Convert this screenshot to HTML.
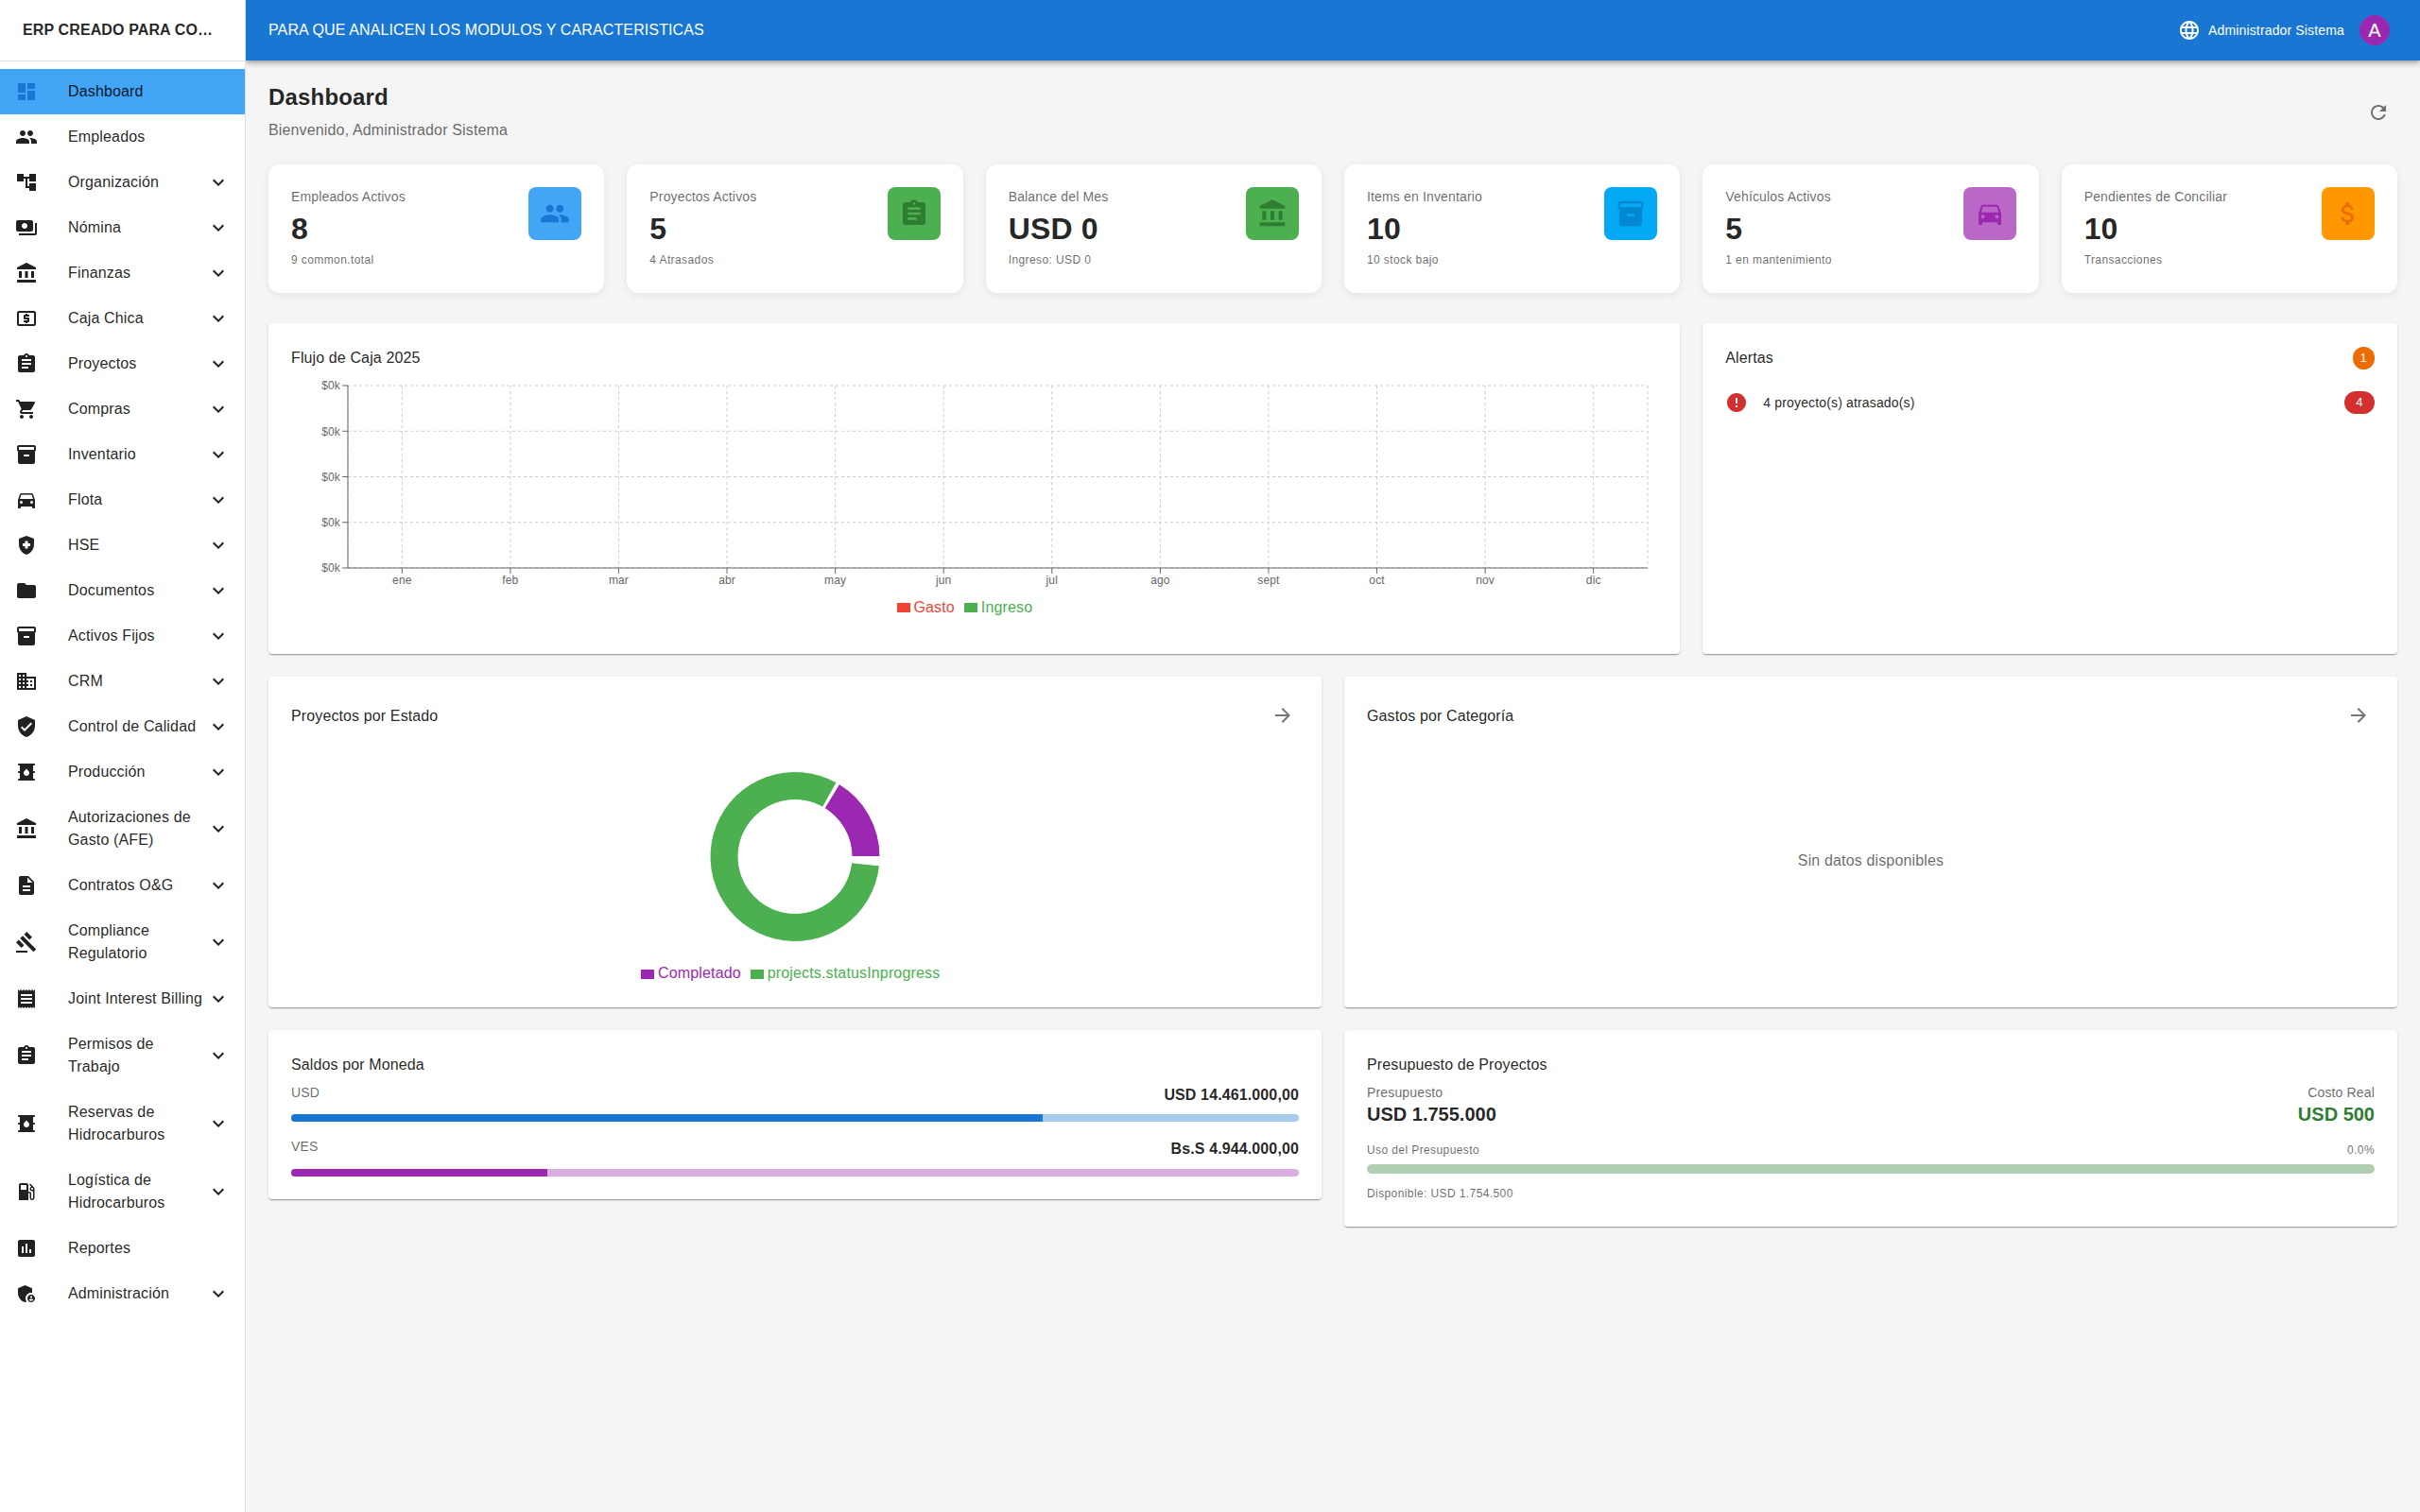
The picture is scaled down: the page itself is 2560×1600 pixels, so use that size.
<!DOCTYPE html>
<html lang="es"><head><meta charset="utf-8"><title>Dashboard</title>
<style>
*{box-sizing:border-box}
html,body{margin:0;padding:0}
body{width:2560px;height:1600px;overflow:hidden;background:#f5f5f5;font-family:"Liberation Sans",Arial,sans-serif;color:rgba(0,0,0,.87);font-size:16px;line-height:1.5;letter-spacing:.15px;position:relative}
.ic{display:inline-block;width:24px;height:24px;fill:currentColor;flex-shrink:0}
#side{position:absolute;z-index:5;left:0;top:0;width:260px;height:1600px;background:#fff;border-right:1px solid rgba(0,0,0,.12)}
#brand{height:64px;padding:0 24px;display:flex;align-items:center;font-weight:700;font-size:16px;letter-spacing:.12px;white-space:nowrap;overflow:hidden}
#brand span{overflow:hidden;text-overflow:ellipsis;white-space:nowrap;display:block;width:100%}
#sdiv{height:1px;background:rgba(0,0,0,.12)}
#nav{padding:8px 0}
.ni{display:flex;align-items:center;padding:8px 16px;min-height:48px;color:rgba(0,0,0,.87)}
.ni.sel{background:#42a5f5}
.ni.sel .nic{color:#1976d2}
.nic{min-width:56px;display:inline-flex;color:rgba(0,0,0,.87)}
.nt{flex:1 1 auto;min-width:0;margin:4px 0;font-size:16px;line-height:24px;letter-spacing:.15px}
.ex{color:rgba(0,0,0,.87)}
#bar{position:absolute;left:260px;top:0;width:2300px;height:64px;background:#1976d2;color:#fff;display:flex;align-items:center;padding:0 24px;box-shadow:0 2px 4px -1px rgba(0,0,0,.2),0 4px 5px 0 rgba(0,0,0,.14),0 1px 10px 0 rgba(0,0,0,.12)}
#bar .ttl{flex:1;font-size:16px;letter-spacing:.12px}
#bar .usr{font-size:14px;margin-left:8px;margin-right:16px;width:144px;white-space:nowrap}
#bar .av{margin-right:8px;width:32px;height:32px;border-radius:50%;background:#9c27b0;color:#fff;display:flex;align-items:center;justify-content:center;font-size:20px}
#main{position:absolute;left:284px;top:88px;width:2252px}
h1{margin:0;font-size:24px;font-weight:700;line-height:1.235;letter-spacing:.176px}
.sub{color:rgba(0,0,0,.6);font-size:16px;margin-top:8px}
.rf{position:absolute;right:8px;top:19px;color:rgba(0,0,0,.54)}
.stats{position:absolute;top:86px;left:0;width:2252px;display:flex;gap:24px}
.sc{position:relative;flex:1 1 0;height:136px;background:#fff;border-radius:12px;box-shadow:0 2px 8px rgba(0,0,0,.08);padding:24px}
.sl{font-size:14px;line-height:20px;color:rgba(0,0,0,.6)}
.sv{font-size:32px;font-weight:700;line-height:40px;margin-top:4px}
.ss{font-size:12px;line-height:20px;color:rgba(0,0,0,.6);margin-top:3px;letter-spacing:.4px}
.sb{position:absolute;right:24px;top:24px;width:56px;height:56px;border-radius:8px;display:flex;align-items:center;justify-content:center}
.card{position:absolute;background:#fff;border-radius:4px;box-shadow:0 2px 1px -1px rgba(0,0,0,.2),0 1px 1px 0 rgba(0,0,0,.14),0 1px 3px 0 rgba(0,0,0,.12)}
.ct{position:absolute;left:24px;font-size:16px;line-height:26px;letter-spacing:.12px;white-space:nowrap}
.abs{position:absolute;white-space:nowrap}
.sec{color:rgba(0,0,0,.6)}
.b14{font-size:14px;line-height:20px;letter-spacing:.15px}
.cap{font-size:12px;line-height:20px;letter-spacing:.4px}
.chip{position:absolute;height:24px;border-radius:12px;color:#fff;font-size:13px;line-height:24px;text-align:center}
.lg{position:absolute;font-size:16px;line-height:24px;white-space:nowrap;display:flex;align-items:center}
.lg i{display:inline-block;width:14px;height:10.5px;margin-right:3.4px}
.lg span{margin-right:10.6px}
.pb{position:absolute;left:24px;right:24px;overflow:hidden}
.pb b{display:block;height:100%}
</style></head><body>
<div id="side">
<div id="brand"><span>ERP CREADO PARA CO…</span></div>
<div id="sdiv"></div>
<div id="nav">
<div class="ni sel"><span class="nic"><svg class="ic" viewBox="0 0 24 24" style="width:24px;height:24px"><path d="M3 13h8V3H3zm0 8h8v-6H3zm10 0h8V11h-8zm0-18v6h8V3z"/></svg></span><span class="nt">Dashboard</span></div>
<div class="ni"><span class="nic"><svg class="ic" viewBox="0 0 24 24" style="width:24px;height:24px"><path d="M16 11c1.66 0 2.99-1.34 2.99-3S17.66 5 16 5c-1.66 0-3 1.34-3 3s1.34 3 3 3zm-8 0c1.66 0 2.99-1.34 2.99-3S9.66 5 8 5C6.34 5 5 6.34 5 8s1.34 3 3 3zm0 2c-2.33 0-7 1.17-7 3.5V19h14v-2.5c0-2.33-4.67-3.5-7-3.500zm8 0c-.29 0-.62.02-.97.05 1.16.84 1.97 1.97 1.97 3.45V19h6v-2.500c0-2.33-4.67-3.5-7-3.5z"/></svg></span><span class="nt">Empleados</span></div>
<div class="ni"><span class="nic"><svg class="ic" viewBox="0 0 24 24" style="width:24px;height:24px"><path d="M22 11V3h-7v3H9V3H2v8h7V8h2v10h4v3h7v-8h-7v3h-2V8h2v3z"/></svg></span><span class="nt">Organización</span><svg class="ic ex" viewBox="0 0 24 24" style="width:24px;height:24px"><path d="M16.590 8.590 12 13.170 7.410 8.590 6 10l6 6 6-6z"/></svg></div>
<div class="ni"><span class="nic"><svg class="ic" viewBox="0 0 24 24" style="width:24px;height:24px"><path d="M19 14V6c0-1.1-.9-2-2-2H3c-1.1 0-2 .9-2 2v8c0 1.1.9 2 2 2h14c1.1 0 2-.9 2-2zm-9-1c-1.66 0-3-1.34-3-3s1.34-3 3-3 3 1.34 3 3-1.34 3-3 3zm13-6v11c0 1.1-.9 2-2 2H4v-2h17V7h2z"/></svg></span><span class="nt">Nómina</span><svg class="ic ex" viewBox="0 0 24 24" style="width:24px;height:24px"><path d="M16.590 8.590 12 13.170 7.410 8.590 6 10l6 6 6-6z"/></svg></div>
<div class="ni"><span class="nic"><svg class="ic" viewBox="0 0 24 24" style="width:24px;height:24px"><path d="M4 10h3v7H4zM10.5 10h3v7h-3zM2 19h20v3H2zM17 10h3v7h-3zM12 1 2 6v2h20V6z"/></svg></span><span class="nt">Finanzas</span><svg class="ic ex" viewBox="0 0 24 24" style="width:24px;height:24px"><path d="M16.590 8.590 12 13.170 7.410 8.590 6 10l6 6 6-6z"/></svg></div>
<div class="ni"><span class="nic"><svg class="ic" viewBox="0 0 24 24" style="width:24px;height:24px"><path d="M11 17h2v-1h1c.55 0 1-.45 1-1v-3c0-.55-.45-1-1-1h-3v-1h4V8h-2V7h-2v1h-1c-.55 0-1 .45-1 1v3c0 .55.45 1 1 1h3v1H9v2h2v1zm9-13H4c-1.11 0-1.99.89-1.99 2L2 18c0 1.11.89 2 2 2h16c1.11 0 2-.89 2-2V6c0-1.11-.89-2-2-2zm0 14H4V6h16v12z"/></svg></span><span class="nt">Caja Chica</span><svg class="ic ex" viewBox="0 0 24 24" style="width:24px;height:24px"><path d="M16.590 8.590 12 13.170 7.410 8.590 6 10l6 6 6-6z"/></svg></div>
<div class="ni"><span class="nic"><svg class="ic" viewBox="0 0 24 24" style="width:24px;height:24px"><path d="M19 3h-4.180C14.4 1.84 13.3 1 12 1c-1.3 0-2.4.84-2.82 2H5c-1.1 0-2 .9-2 2v14c0 1.1.9 2 2 2h14c1.1 0 2-.9 2-2V5c0-1.1-.9-2-2-2zm-7 0c.55 0 1 .45 1 1s-.45 1-1 1-1-.45-1-1 .45-1 1-1zm2 14H7v-2h7v2zm3-4H7v-2h10v2zm0-4H7V7h10v2z"/></svg></span><span class="nt">Proyectos</span><svg class="ic ex" viewBox="0 0 24 24" style="width:24px;height:24px"><path d="M16.590 8.590 12 13.170 7.410 8.590 6 10l6 6 6-6z"/></svg></div>
<div class="ni"><span class="nic"><svg class="ic" viewBox="0 0 24 24" style="width:24px;height:24px"><path d="M7 18c-1.1 0-1.99.9-1.99 2S5.9 22 7 22s2-.9 2-2-.9-2-2-2zM1 2v2h2l3.6 7.59-1.35 2.45c-.16.28-.25.61-.25.96 0 1.1.9 2 2 2h12v-2H7.42c-.14 0-.25-.11-.25-.25l.03-.12.9-1.63h7.45c.75 0 1.41-.41 1.75-1.03l3.58-6.49c.08-.14.12-.31.12-.48 0-.55-.45-1-1-1H5.21l-.94-2H1zm16 16c-1.1 0-1.99.9-1.99 2s.89 2 1.99 2 2-.9 2-2-.9-2-2-2z"/></svg></span><span class="nt">Compras</span><svg class="ic ex" viewBox="0 0 24 24" style="width:24px;height:24px"><path d="M16.590 8.590 12 13.170 7.410 8.590 6 10l6 6 6-6z"/></svg></div>
<div class="ni"><span class="nic"><svg class="ic" viewBox="0 0 24 24" style="width:24px;height:24px"><path d="M20 2H4c-1 0-2 .9-2 2v3.010c0 .72.43 1.34 1 1.69V20c0 1.1 1.1 2 2 2h14c.9 0 2-.9 2-2V8.7c.57-.35 1-.97 1-1.69V4c0-1.1-1-2-2-2zm-5 12H9v-2h6v2zm5-7H4V4h16v3z"/></svg></span><span class="nt">Inventario</span><svg class="ic ex" viewBox="0 0 24 24" style="width:24px;height:24px"><path d="M16.590 8.590 12 13.170 7.410 8.590 6 10l6 6 6-6z"/></svg></div>
<div class="ni"><span class="nic"><svg class="ic" viewBox="0 0 24 24" style="width:24px;height:24px"><path d="M18.92 6.010C18.72 5.42 18.16 5 17.5 5h-11c-.66 0-1.21.42-1.42 1.010L3 12v8c0 .55.45 1 1 1h1c.55 0 1-.45 1-1v-1h12v1c0 .55.45 1 1 1h1c.55 0 1-.45 1-1v-8l-2.080-5.990zM6.5 16c-.83 0-1.500-.67-1.500-1.500S5.67 13 6.5 13s1.5.67 1.5 1.500S7.33 16 6.5 16zm11 0c-.83 0-1.500-.67-1.500-1.500s.67-1.500 1.500-1.500 1.500.67 1.500 1.500-.67 1.500-1.500 1.500zM5 11l1.500-4.500h11L19 11H5z"/></svg></span><span class="nt">Flota</span><svg class="ic ex" viewBox="0 0 24 24" style="width:24px;height:24px"><path d="M16.590 8.590 12 13.170 7.410 8.590 6 10l6 6 6-6z"/></svg></div>
<div class="ni"><span class="nic"><svg class="ic" viewBox="0 0 24 24" style="width:24px;height:24px"><path d="M10.5 13H8v-3h2.500V7.500h3V10H16v3h-2.500v2.500h-3V13zM12 2 4 5v6.090c0 5.050 3.410 9.760 8 10.910 4.590-1.150 8-5.860 8-10.910V5l-8-3z"/></svg></span><span class="nt">HSE</span><svg class="ic ex" viewBox="0 0 24 24" style="width:24px;height:24px"><path d="M16.590 8.590 12 13.170 7.410 8.590 6 10l6 6 6-6z"/></svg></div>
<div class="ni"><span class="nic"><svg class="ic" viewBox="0 0 24 24" style="width:24px;height:24px"><path d="M10 4H4c-1.1 0-1.99.9-1.99 2L2 18c0 1.1.9 2 2 2h16c1.1 0 2-.9 2-2V8c0-1.1-.9-2-2-2h-8l-2-2z"/></svg></span><span class="nt">Documentos</span><svg class="ic ex" viewBox="0 0 24 24" style="width:24px;height:24px"><path d="M16.590 8.590 12 13.170 7.410 8.590 6 10l6 6 6-6z"/></svg></div>
<div class="ni"><span class="nic"><svg class="ic" viewBox="0 0 24 24" style="width:24px;height:24px"><path d="M20 2H4c-1 0-2 .9-2 2v3.010c0 .72.43 1.34 1 1.69V20c0 1.1 1.1 2 2 2h14c.9 0 2-.9 2-2V8.7c.57-.35 1-.97 1-1.69V4c0-1.1-1-2-2-2zm-5 12H9v-2h6v2zm5-7H4V4h16v3z"/></svg></span><span class="nt">Activos Fijos</span><svg class="ic ex" viewBox="0 0 24 24" style="width:24px;height:24px"><path d="M16.590 8.590 12 13.170 7.410 8.590 6 10l6 6 6-6z"/></svg></div>
<div class="ni"><span class="nic"><svg class="ic" viewBox="0 0 24 24" style="width:24px;height:24px"><path d="M12 7V3H2v18h20V7H12zM6 19H4v-2h2v2zm0-4H4v-2h2v2zm0-4H4V9h2v2zm0-4H4V5h2v2zm4 12H8v-2h2v2zm0-4H8v-2h2v2zm0-4H8V9h2v2zm0-4H8V5h2v2zm10 12h-8v-2h2v-2h-2v-2h2v-2h-2V9h8v10zm-2-8h-2v2h2v-2zm0 4h-2v2h2v-2z"/></svg></span><span class="nt">CRM</span><svg class="ic ex" viewBox="0 0 24 24" style="width:24px;height:24px"><path d="M16.590 8.590 12 13.170 7.410 8.590 6 10l6 6 6-6z"/></svg></div>
<div class="ni"><span class="nic"><svg class="ic" viewBox="0 0 24 24" style="width:24px;height:24px"><path d="M12 1 3 5v6c0 5.550 3.840 10.740 9 12 5.160-1.260 9-6.450 9-12V5l-9-4zm-2 16-4-4 1.410-1.410L10 14.170l6.590-6.590L18 9l-8 8z"/></svg></span><span class="nt">Control de Calidad</span><svg class="ic ex" viewBox="0 0 24 24" style="width:24px;height:24px"><path d="M16.590 8.590 12 13.170 7.410 8.590 6 10l6 6 6-6z"/></svg></div>
<div class="ni"><span class="nic"><svg class="ic" viewBox="0 0 24 24" style="width:24px;height:24px"><path d="M20 13c.55 0 1-.45 1-1s-.45-1-1-1h-1V5h1c.55 0 1-.45 1-1s-.45-1-1-1H4c-.55 0-1 .45-1 1s.45 1 1 1h1v6H4c-.55 0-1 .45-1 1s.45 1 1 1h1v6H4c-.55 0-1 .45-1 1s.45 1 1 1h16c.55 0 1-.45 1-1s-.45-1-1-1h-1v-6h1zm-8 3c-1.660 0-3-1.320-3-2.950 0-1.300.52-1.670 3-4.550 2.470 2.860 3 3.240 3 4.550 0 1.630-1.340 2.950-3 2.950z"/></svg></span><span class="nt">Producción</span><svg class="ic ex" viewBox="0 0 24 24" style="width:24px;height:24px"><path d="M16.590 8.590 12 13.170 7.410 8.590 6 10l6 6 6-6z"/></svg></div>
<div class="ni"><span class="nic"><svg class="ic" viewBox="0 0 24 24" style="width:24px;height:24px"><path d="M4 10h3v7H4zM10.5 10h3v7h-3zM2 19h20v3H2zM17 10h3v7h-3zM12 1 2 6v2h20V6z"/></svg></span><span class="nt">Autorizaciones de<br>Gasto (AFE)</span><svg class="ic ex" viewBox="0 0 24 24" style="width:24px;height:24px"><path d="M16.590 8.590 12 13.170 7.410 8.590 6 10l6 6 6-6z"/></svg></div>
<div class="ni"><span class="nic"><svg class="ic" viewBox="0 0 24 24" style="width:24px;height:24px"><path d="M14 2H6c-1.1 0-1.99.9-1.99 2L4 20c0 1.1.89 2 1.99 2H18c1.1 0 2-.9 2-2V8l-6-6zm2 16H8v-2h8v2zm0-4H8v-2h8v2zm-3-5V3.500L18.500 9H13z"/></svg></span><span class="nt">Contratos O&amp;G</span><svg class="ic ex" viewBox="0 0 24 24" style="width:24px;height:24px"><path d="M16.590 8.590 12 13.170 7.410 8.590 6 10l6 6 6-6z"/></svg></div>
<div class="ni"><span class="nic"><svg class="ic" viewBox="0 0 24 24" style="width:24px;height:24px"><path d="M1 21h12v2H1zM5.245 8.070l2.830-2.827 14.140 14.142-2.828 2.828zM12.317 1l5.657 5.656-2.830 2.830-5.654-5.660zM3.825 9.485l5.657 5.657-2.828 2.828-5.657-5.657z"/></svg></span><span class="nt">Compliance<br>Regulatorio</span><svg class="ic ex" viewBox="0 0 24 24" style="width:24px;height:24px"><path d="M16.590 8.590 12 13.170 7.410 8.590 6 10l6 6 6-6z"/></svg></div>
<div class="ni"><span class="nic"><svg class="ic" viewBox="0 0 24 24" style="width:24px;height:24px"><path d="M18 17H6v-2h12v2zm0-4H6v-2h12v2zm0-4H6V7h12v2zM3 22l1.500-1.500L6 22l1.500-1.500L9 22l1.500-1.500L12 22l1.500-1.500L15 22l1.500-1.500L18 22l1.500-1.500L21 22V2l-1.500 1.500L18 2l-1.500 1.500L15 2l-1.500 1.500L12 2l-1.500 1.500L9 2 7.500 3.500 6 2 4.500 3.500 3 2v20z"/></svg></span><span class="nt">Joint Interest Billing</span><svg class="ic ex" viewBox="0 0 24 24" style="width:24px;height:24px"><path d="M16.590 8.590 12 13.170 7.410 8.590 6 10l6 6 6-6z"/></svg></div>
<div class="ni"><span class="nic"><svg class="ic" viewBox="0 0 24 24" style="width:24px;height:24px"><path d="M19 3h-4.180C14.4 1.84 13.3 1 12 1c-1.3 0-2.4.84-2.82 2H5c-1.1 0-2 .9-2 2v14c0 1.1.9 2 2 2h14c1.1 0 2-.9 2-2V5c0-1.1-.9-2-2-2zm-7 0c.55 0 1 .45 1 1s-.45 1-1 1-1-.45-1-1 .45-1 1-1zm2 14H7v-2h7v2zm3-4H7v-2h10v2zm0-4H7V7h10v2z"/></svg></span><span class="nt">Permisos de<br>Trabajo</span><svg class="ic ex" viewBox="0 0 24 24" style="width:24px;height:24px"><path d="M16.590 8.590 12 13.170 7.410 8.590 6 10l6 6 6-6z"/></svg></div>
<div class="ni"><span class="nic"><svg class="ic" viewBox="0 0 24 24" style="width:24px;height:24px"><path d="M20 13c.55 0 1-.45 1-1s-.45-1-1-1h-1V5h1c.55 0 1-.45 1-1s-.45-1-1-1H4c-.55 0-1 .45-1 1s.45 1 1 1h1v6H4c-.55 0-1 .45-1 1s.45 1 1 1h1v6H4c-.55 0-1 .45-1 1s.45 1 1 1h16c.55 0 1-.45 1-1s-.45-1-1-1h-1v-6h1zm-8 3c-1.660 0-3-1.320-3-2.950 0-1.300.52-1.670 3-4.550 2.470 2.860 3 3.240 3 4.550 0 1.630-1.340 2.950-3 2.950z"/></svg></span><span class="nt">Reservas de<br>Hidrocarburos</span><svg class="ic ex" viewBox="0 0 24 24" style="width:24px;height:24px"><path d="M16.590 8.590 12 13.170 7.410 8.590 6 10l6 6 6-6z"/></svg></div>
<div class="ni"><span class="nic"><svg class="ic" viewBox="0 0 24 24" style="width:24px;height:24px"><path d="M19.770 7.230l.010-.010-3.720-3.720L15 4.560l2.110 2.110c-.94.36-1.610 1.260-1.610 2.330 0 1.380 1.120 2.500 2.500 2.500.36 0 .69-.08 1-.21v7.210c0 .55-.45 1-1 1s-1-.45-1-1V14c0-1.100-.9-2-2-2h-1V5c0-1.100-.9-2-2-2H6c-1.100 0-2 .9-2 2v16h10v-7.500h1.500v5c0 1.380 1.120 2.500 2.500 2.500s2.500-1.120 2.500-2.500V9c0-.69-.28-1.320-.73-1.770zM12 10H6V5h6v5zm6 0c-.55 0-1-.45-1-1s.45-1 1-1 1 .45 1 1-.45 1-1 1z"/></svg></span><span class="nt">Logística de<br>Hidrocarburos</span><svg class="ic ex" viewBox="0 0 24 24" style="width:24px;height:24px"><path d="M16.590 8.590 12 13.170 7.410 8.590 6 10l6 6 6-6z"/></svg></div>
<div class="ni"><span class="nic"><svg class="ic" viewBox="0 0 24 24" style="width:24px;height:24px"><path d="M19 3H5c-1.100 0-2 .9-2 2v14c0 1.100.9 2 2 2h14c1.100 0 2-.9 2-2V5c0-1.100-.9-2-2-2zM9 17H7v-7h2v7zm4 0h-2V7h2v10zm4 0h-2v-4h2v4z"/></svg></span><span class="nt">Reportes</span></div>
<div class="ni"><span class="nic"><svg class="ic" viewBox="0 0 24 24" style="width:24px;height:24px"><path d="M17 11c.34 0 .67.04 1 .09V6.270L10.500 3 3 6.270v4.910c0 4.540 3.200 8.790 7.500 9.820.55-.13 1.080-.32 1.600-.55-.69-.98-1.100-2.170-1.100-3.450 0-3.310 2.690-6 6-6zM17 13c-2.210 0-4 1.790-4 4s1.790 4 4 4 4-1.790 4-4-1.790-4-4-4zm0 1.380c.62 0 1.120.51 1.120 1.120s-.51 1.120-1.120 1.120-1.120-.51-1.120-1.120.500-1.120 1.120-1.120zm0 5.370c-.93 0-1.740-.46-2.240-1.170.05-.72 1.510-1.080 2.240-1.080s2.190.36 2.240 1.080c-.5.71-1.310 1.170-2.240 1.170z"/></svg></span><span class="nt">Administración</span><svg class="ic ex" viewBox="0 0 24 24" style="width:24px;height:24px"><path d="M16.590 8.590 12 13.170 7.410 8.590 6 10l6 6 6-6z"/></svg></div>
</div>
</div>
<div id="bar"><div class="ttl">PARA QUE ANALICEN LOS MODULOS Y CARACTERISTICAS</div><svg class="ic" viewBox="0 0 24 24" style="width:24px;height:24px"><path d="M11.990 2C6.470 2 2 6.480 2 12s4.470 10 9.990 10C17.520 22 22 17.520 22 12S17.520 2 11.990 2zm6.930 6h-2.950c-.32-1.250-.78-2.450-1.380-3.560 1.840.63 3.370 1.910 4.330 3.560zM12 4.040c.83 1.200 1.480 2.530 1.910 3.960h-3.820c.43-1.430 1.080-2.760 1.910-3.960zM4.260 14C4.100 13.360 4 12.690 4 12s.1-1.360.26-2h3.380c-.08.66-.14 1.320-.14 2 0 .68.06 1.340.14 2H4.260zm.82 2h2.950c.32 1.250.78 2.450 1.380 3.560-1.840-.63-3.370-1.900-4.330-3.560zm2.950-8H5.080c.96-1.660 2.490-2.930 4.330-3.560C8.810 5.550 8.350 6.750 8.030 8zM12 19.960c-.83-1.200-1.480-2.530-1.910-3.960h3.820c-.43 1.430-1.080 2.760-1.910 3.960zM14.340 14H9.660c-.09-.66-.16-1.320-.16-2 0-.68.07-1.350.16-2h4.680c.09.65.16 1.320.16 2 0 .68-.07 1.340-.16 2zm.25 5.560c.6-1.110 1.060-2.310 1.380-3.560h2.950c-.96 1.650-2.490 2.930-4.330 3.560zM16.360 14c.08-.66.14-1.320.14-2 0-.68-.06-1.340-.14-2h3.380c.16.64.26 1.310.26 2s-.1 1.360-.26 2h-3.380z"/></svg><span class="usr">Administrador Sistema</span><div class="av">A</div></div>
<div id="main">
<h1>Dashboard</h1>
<div class="sub">Bienvenido, Administrador Sistema</div>
<div class="rf"><svg class="ic" viewBox="0 0 24 24" style="width:24px;height:24px"><path d="M17.650 6.350C16.200 4.900 14.210 4 12 4c-4.420 0-7.990 3.580-7.990 8s3.570 8 7.990 8c3.730 0 6.840-2.550 7.730-6h-2.080c-.82 2.330-3.040 4-5.650 4-3.310 0-6-2.690-6-6s2.690-6 6-6c1.660 0 3.140.69 4.220 1.780L13 11h7V4l-2.350 2.350z"/></svg></div>
<div class="stats">
<div class="sc"><div class="sl">Empleados Activos</div><div class="sv">8</div><div class="ss">9 common.total</div><div class="sb" style="background:#42a5f5"><svg class="ic" viewBox="0 0 24 24" style="width:32px;height:32px;fill:#1976d2"><path d="M16 11c1.66 0 2.99-1.34 2.99-3S17.66 5 16 5c-1.66 0-3 1.34-3 3s1.34 3 3 3zm-8 0c1.66 0 2.99-1.34 2.99-3S9.66 5 8 5C6.34 5 5 6.34 5 8s1.34 3 3 3zm0 2c-2.33 0-7 1.17-7 3.5V19h14v-2.5c0-2.33-4.67-3.5-7-3.500zm8 0c-.29 0-.62.02-.97.05 1.16.84 1.97 1.97 1.97 3.45V19h6v-2.500c0-2.33-4.67-3.5-7-3.5z"/></svg></div></div>
<div class="sc"><div class="sl">Proyectos Activos</div><div class="sv">5</div><div class="ss">4 Atrasados</div><div class="sb" style="background:#4caf50"><svg class="ic" viewBox="0 0 24 24" style="width:32px;height:32px;fill:#2e7d32"><path d="M19 3h-4.180C14.4 1.84 13.3 1 12 1c-1.3 0-2.4.84-2.82 2H5c-1.1 0-2 .9-2 2v14c0 1.1.9 2 2 2h14c1.1 0 2-.9 2-2V5c0-1.1-.9-2-2-2zm-7 0c.55 0 1 .45 1 1s-.45 1-1 1-1-.45-1-1 .45-1 1-1zm2 14H7v-2h7v2zm3-4H7v-2h10v2zm0-4H7V7h10v2z"/></svg></div></div>
<div class="sc"><div class="sl">Balance del Mes</div><div class="sv">USD 0</div><div class="ss">Ingreso: USD 0</div><div class="sb" style="background:#4caf50"><svg class="ic" viewBox="0 0 24 24" style="width:32px;height:32px;fill:#2e7d32"><path d="M4 10h3v7H4zM10.5 10h3v7h-3zM2 19h20v3H2zM17 10h3v7h-3zM12 1 2 6v2h20V6z"/></svg></div></div>
<div class="sc"><div class="sl">Items en Inventario</div><div class="sv">10</div><div class="ss">10 stock bajo</div><div class="sb" style="background:#03a9f4"><svg class="ic" viewBox="0 0 24 24" style="width:32px;height:32px;fill:#0288d1"><path d="M20 2H4c-1 0-2 .9-2 2v3.010c0 .72.43 1.34 1 1.69V20c0 1.1 1.1 2 2 2h14c.9 0 2-.9 2-2V8.7c.57-.35 1-.97 1-1.69V4c0-1.1-1-2-2-2zm-5 12H9v-2h6v2zm5-7H4V4h16v3z"/></svg></div></div>
<div class="sc"><div class="sl">Vehículos Activos</div><div class="sv">5</div><div class="ss">1 en mantenimiento</div><div class="sb" style="background:#ba68c8"><svg class="ic" viewBox="0 0 24 24" style="width:32px;height:32px;fill:#9c27b0"><path d="M18.92 6.010C18.72 5.42 18.16 5 17.5 5h-11c-.66 0-1.21.42-1.42 1.010L3 12v8c0 .55.45 1 1 1h1c.55 0 1-.45 1-1v-1h12v1c0 .55.45 1 1 1h1c.55 0 1-.45 1-1v-8l-2.080-5.990zM6.5 16c-.83 0-1.500-.67-1.500-1.500S5.67 13 6.5 13s1.5.67 1.5 1.500S7.33 16 6.5 16zm11 0c-.83 0-1.500-.67-1.500-1.500s.67-1.500 1.500-1.500 1.500.67 1.500 1.500-.67 1.500-1.500 1.500zM5 11l1.500-4.500h11L19 11H5z"/></svg></div></div>
<div class="sc"><div class="sl">Pendientes de Conciliar</div><div class="sv">10</div><div class="ss">Transacciones</div><div class="sb" style="background:#ff9800"><svg class="ic" viewBox="0 0 24 24" style="width:32px;height:32px;fill:#ed6c02"><path d="M11.800 10.900c-2.270-.59-3-1.200-3-2.150 0-1.090 1.010-1.850 2.700-1.850 1.780 0 2.440.85 2.500 2.100h2.210c-.07-1.720-1.120-3.300-3.210-3.810V3h-3v2.160c-1.940.42-3.500 1.680-3.500 3.610 0 2.310 1.910 3.460 4.700 4.130 2.500.6 3 1.480 3 2.410 0 .69-.49 1.790-2.700 1.790-2.060 0-2.870-.92-2.980-2.100h-2.200c.12 2.190 1.760 3.420 3.680 3.830V21h3v-2.150c1.950-.37 3.500-1.500 3.500-3.550 0-2.840-2.430-3.810-4.700-4.400z"/></svg></div></div>
</div>
</div>

<div class="card" id="c1" style="left:284px;top:342px;width:1493.33px;height:350px">
<div class="ct" style="top:24px">Flujo de Caja 2025</div>
<div style="position:absolute;left:24px;top:56px"><svg class="bc" width="1445.33" height="270" viewBox="0 0 1445.33 270">
<g stroke="#ccc" stroke-dasharray="3 3" fill="none">
<line x1="60" y1="10" x2="1435.00" y2="10"/>
<line x1="60" y1="58.25" x2="1435.00" y2="58.25"/>
<line x1="60" y1="106.5" x2="1435.00" y2="106.5"/>
<line x1="60" y1="154.75" x2="1435.00" y2="154.75"/>
<line x1="60" y1="203" x2="1435.00" y2="203"/>
<line x1="60.00" y1="10" x2="60.00" y2="203"/>
<line x1="117.29" y1="10" x2="117.29" y2="203"/>
<line x1="231.88" y1="10" x2="231.88" y2="203"/>
<line x1="346.46" y1="10" x2="346.46" y2="203"/>
<line x1="461.04" y1="10" x2="461.04" y2="203"/>
<line x1="575.62" y1="10" x2="575.62" y2="203"/>
<line x1="690.21" y1="10" x2="690.21" y2="203"/>
<line x1="804.79" y1="10" x2="804.79" y2="203"/>
<line x1="919.38" y1="10" x2="919.38" y2="203"/>
<line x1="1033.96" y1="10" x2="1033.96" y2="203"/>
<line x1="1148.54" y1="10" x2="1148.54" y2="203"/>
<line x1="1263.12" y1="10" x2="1263.12" y2="203"/>
<line x1="1377.71" y1="10" x2="1377.71" y2="203"/>
<line x1="1435.00" y1="10" x2="1435.00" y2="203"/>
</g>
<g stroke="#666" fill="none">
<line x1="60" y1="203" x2="1435.00" y2="203"/>
<line x1="60" y1="10" x2="60" y2="203"/>
<line x1="117.29" y1="203" x2="117.29" y2="209"/>
<line x1="231.88" y1="203" x2="231.88" y2="209"/>
<line x1="346.46" y1="203" x2="346.46" y2="209"/>
<line x1="461.04" y1="203" x2="461.04" y2="209"/>
<line x1="575.62" y1="203" x2="575.62" y2="209"/>
<line x1="690.21" y1="203" x2="690.21" y2="209"/>
<line x1="804.79" y1="203" x2="804.79" y2="209"/>
<line x1="919.38" y1="203" x2="919.38" y2="209"/>
<line x1="1033.96" y1="203" x2="1033.96" y2="209"/>
<line x1="1148.54" y1="203" x2="1148.54" y2="209"/>
<line x1="1263.12" y1="203" x2="1263.12" y2="209"/>
<line x1="1377.71" y1="203" x2="1377.71" y2="209"/>
<line x1="54" y1="10" x2="60" y2="10"/>
<line x1="54" y1="58.25" x2="60" y2="58.25"/>
<line x1="54" y1="106.5" x2="60" y2="106.5"/>
<line x1="54" y1="154.75" x2="60" y2="154.75"/>
<line x1="54" y1="203" x2="60" y2="203"/>
</g>
<g fill="#666" font-size="12" text-anchor="middle">
<text x="117.29" y="211" dy="0.71em">ene</text>
<text x="231.88" y="211" dy="0.71em">feb</text>
<text x="346.46" y="211" dy="0.71em">mar</text>
<text x="461.04" y="211" dy="0.71em">abr</text>
<text x="575.62" y="211" dy="0.71em">may</text>
<text x="690.21" y="211" dy="0.71em">jun</text>
<text x="804.79" y="211" dy="0.71em">jul</text>
<text x="919.38" y="211" dy="0.71em">ago</text>
<text x="1033.96" y="211" dy="0.71em">sept</text>
<text x="1148.54" y="211" dy="0.71em">oct</text>
<text x="1263.12" y="211" dy="0.71em">nov</text>
<text x="1377.71" y="211" dy="0.71em">dic</text>
</g>
<g fill="#666" font-size="12" text-anchor="end">
<text x="52" y="10" dy="0.355em">$0k</text>
<text x="52" y="58.25" dy="0.355em">$0k</text>
<text x="52" y="106.5" dy="0.355em">$0k</text>
<text x="52" y="154.75" dy="0.355em">$0k</text>
<text x="52" y="203" dy="0.355em">$0k</text>
</g>
</svg></div>
<div class="lg" style="left:665px;top:289px"><i style="background:#f44336"></i><span style="color:#f44336">Gasto</span><i style="background:#4caf50"></i><span style="color:#4caf50;margin-right:0">Ingreso</span></div>
</div>

<div class="card" id="c2" style="left:1801.33px;top:342px;width:734.67px;height:350px">
<div class="ct" style="top:24px">Alertas</div>
<div class="chip" style="right:24px;top:25px;width:23.4px;background:#ed6c02">1</div>
<div class="abs" style="left:24px;top:72px;color:#d32f2f;line-height:0"><svg class="ic" viewBox="0 0 24 24" style="width:24px;height:24px"><path d="M12 2C6.480 2 2 6.480 2 12s4.480 10 10 10 10-4.480 10-10S17.520 2 12 2zm1 15h-2v-2h2v2zm0-4h-2V7h2v6z"/></svg></div>
<div class="abs b14" style="left:64px;top:74px">4 proyecto(s) atrasado(s)</div>
<div class="chip" style="right:24px;top:72px;width:32px;background:#d32f2f">4</div>
</div>

<div class="card" id="c3" style="left:284px;top:716px;width:1114px;height:350px">
<div class="ct" style="top:29px">Proyectos por Estado</div>
<div class="abs" style="right:29px;top:29px;color:rgba(0,0,0,.54)"><svg class="ic" viewBox="0 0 24 24" style="width:24px;height:24px"><path d="M12 4l-1.410 1.410L16.170 11H4v2h12.170l-5.580 5.590L12 20l8-8z"/></svg></div>
<div style="position:absolute;left:24px;top:80px"><svg class="pc" width="1066" height="250" viewBox="0 0 1066 250">
<path d="M623.000,110.500A90,90,0,0,0,579.797,33.623L564.198,59.249A60,60,0,0,1,593.000,110.500Z" fill="#9c27b0" stroke="#fff"/>
<path d="M577.086,32.037A90,90,0,1,0,622.507,119.908L592.671,116.772A60,60,0,1,1,562.390,58.191Z" fill="#4caf50" stroke="#fff"/>
</svg></div>
<div class="lg" style="left:394px;top:302px"><i style="background:#9c27b0;position:relative;top:1px;margin-right:4px"></i><span style="color:#9c27b0;margin-right:10px">Completado</span><i style="background:#4caf50;position:relative;top:1px;margin-right:4px"></i><span style="color:#4caf50;margin-right:0">projects.statusInprogress</span></div>
</div>

<div class="card" id="c4" style="left:1422px;top:716px;width:1114px;height:350px">
<div class="ct" style="top:29px">Gastos por Categoría</div>
<div class="abs" style="right:29px;top:29px;color:rgba(0,0,0,.54)"><svg class="ic" viewBox="0 0 24 24" style="width:24px;height:24px"><path d="M12 4l-1.410 1.410L16.170 11H4v2h12.170l-5.580 5.590L12 20l8-8z"/></svg></div>
<div class="abs sec" style="left:0;right:0;top:183px;text-align:center;font-size:16px;line-height:24px">Sin datos disponibles</div>
</div>

<div class="card" id="c5" style="left:284px;top:1090px;width:1114px;height:178.7px">
<div class="ct" style="top:24px">Saldos por Moneda</div>
<div class="abs b14 sec" style="left:24px;top:56px">USD</div>
<div class="abs" style="right:24px;top:57px;font-weight:700;font-size:16px;line-height:24px;letter-spacing:.12px">USD 14.461.000,00</div>
<div class="pb" style="top:89px;height:8px;border-radius:4px;background:#a7caed"><b style="width:74.555%;background:#1976d2"></b></div>
<div class="abs b14 sec" style="left:24px;top:113px">VES</div>
<div class="abs" style="right:24px;top:114px;font-weight:700;font-size:16px;line-height:24px;letter-spacing:.12px">Bs.S 4.944.000,00</div>
<div class="pb" style="top:147px;height:8px;border-radius:4px;background:#d9ade1"><b style="width:25.45%;background:#9c27b0"></b></div>
</div>

<div class="card" id="c6" style="left:1422px;top:1090px;width:1114px;height:208px">
<div class="ct" style="top:24px">Presupuesto de Proyectos</div>
<div class="abs b14 sec" style="left:24px;top:56px">Presupuesto</div>
<div class="abs" style="left:24px;top:75px;font-weight:700;font-size:20px;line-height:28px;letter-spacing:0">USD 1.755.000</div>
<div class="abs b14 sec" style="right:24px;top:56px">Costo Real</div>
<div class="abs" style="right:24px;top:75px;font-weight:700;font-size:20px;line-height:28px;letter-spacing:0;color:#2e7d32">USD 500</div>
<div class="abs cap sec" style="left:24px;top:117px">Uso del Presupuesto</div>
<div class="abs cap sec" style="right:24px;top:117px">0.0%</div>
<div class="pb" style="top:142px;height:10px;border-radius:5px;background:#b0ceb1"></div>
<div class="abs cap sec" style="left:24px;top:163px">Disponible: USD 1.754.500</div>
</div>
</body></html>
